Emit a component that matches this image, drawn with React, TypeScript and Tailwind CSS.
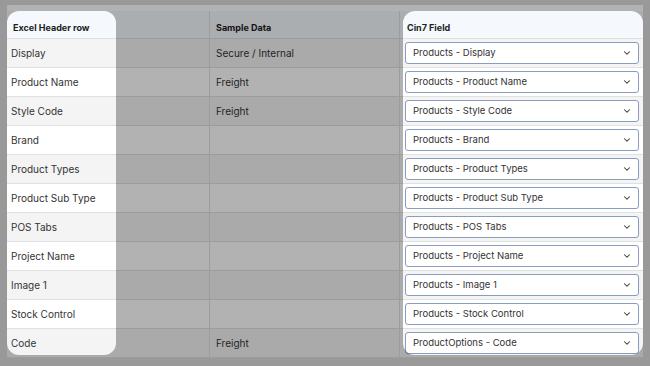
import { ChevronDown } from 'lucide-react';

interface MappingRow {
    header: string;
    sample: string;
    field: string;
}

const rows: MappingRow[] = [
    { header: 'Display', sample: 'Secure / Internal', field: 'Products - Display' },
    { header: 'Product Name', sample: 'Freight', field: 'Products - Product Name' },
    { header: 'Style Code', sample: 'Freight', field: 'Products - Style Code' },
    { header: 'Brand', sample: '', field: 'Products - Brand' },
    { header: 'Product Types', sample: '', field: 'Products - Product Types' },
    { header: 'Product Sub Type', sample: '', field: 'Products - Product Sub Type' },
    { header: 'POS Tabs', sample: '', field: 'Products - POS Tabs' },
    { header: 'Project Name', sample: '', field: 'Products - Project Name' },
    { header: 'Image 1', sample: '', field: 'Products - Image 1' },
    { header: 'Stock Control', sample: '', field: 'Products - Stock Control' },
    { header: 'Code', sample: 'Freight', field: 'ProductOptions - Code' },
];

// spotlight overlay: dims everything except the two highlighted columns
function Spotlight() {
    const hole = (x: number, y: number, w: number, h: number, r: number) =>
        `M${x + r} ${y} H${x + w - r} A${r} ${r} 0 0 1 ${x + w} ${y + r} V${y + h - r} A${r} ${r} 0 0 1 ${x + w - r} ${y + h} H${x + r} A${r} ${r} 0 0 1 ${x} ${y + h - r} V${y + r} A${r} ${r} 0 0 1 ${x + r} ${y} Z`;

    return (
        <svg className="absolute inset-0 pointer-events-none" width="650" height="366">
            <path
                fillRule="evenodd"
                fill="rgba(0,0,0,0.3)"
                d={`M0 0 H650 V366 H0 Z ${hole(7, 11, 109, 344, 12)} ${hole(403, 11, 240, 344, 12)}`}
            />
        </svg>
    );
}

export default function App() {
    return (
        <div
            className="relative w-[650px] h-[366px] overflow-hidden bg-[#dbdbdb] pt-[5px] px-[7px]"
            style={{ fontFamily: 'Inter, "Noto Sans", sans-serif' }}
        >
            <div className="bg-white pt-[6px]">
                <div className="grid grid-cols-[203px_190px_1fr] text-[#333]">
                    {/* header */}
                    <div className="h-[28px] bg-[#f5f9fe] border-b border-r border-[#e0e0e0] flex items-center pt-[7px] pl-[6px] text-[9px] font-bold text-[#222]">
                        Excel Header row
                    </div>
                    <div className="h-[28px] bg-[#f5f9fe] border-b border-r border-[#e0e0e0] flex items-center pt-[7px] pl-[6px] text-[9px] font-bold text-[#222]">
                        Sample Data
                    </div>
                    <div className="h-[28px] bg-[#f5f9fe] border-b border-[#e0e0e0] flex items-center pt-[7px] pl-[7px] text-[9px] font-bold text-[#222]">
                        Cin7 Field
                    </div>

                    {rows.map((row, i) => {
                        const bg = i % 2 === 0 ? 'bg-[#f4f4f4]' : 'bg-white';
                        return (
                            <div key={row.header} className="contents">
                                <div className={`h-[29px] ${bg} border-b border-r border-[#e0e0e0] flex items-center pl-[4px] text-[10px]`}>
                                    {row.header}
                                </div>
                                <div className={`h-[29px] ${bg} border-b border-r border-[#e0e0e0] flex items-center pl-[6px] text-[10px]`}>
                                    {row.sample}
                                </div>
                                <div className={`h-[29px] ${bg} border-b border-[#e0e0e0] flex items-center pl-[5px] pr-[4px]`}>
                                    <div className="w-full h-[22px] bg-white border border-[#8a9dc0] rounded-[3px] flex items-center justify-between pl-[7px] pr-[6px] text-[9.5px] text-[#333]">
                                        <span>{row.field}</span>
                                        <ChevronDown className="w-[10px] h-[10px] text-[#333]" strokeWidth={2.5} />
                                    </div>
                                </div>
                            </div>
                        );
                    })}
                </div>
            </div>
            <Spotlight />
        </div>
    );
}
